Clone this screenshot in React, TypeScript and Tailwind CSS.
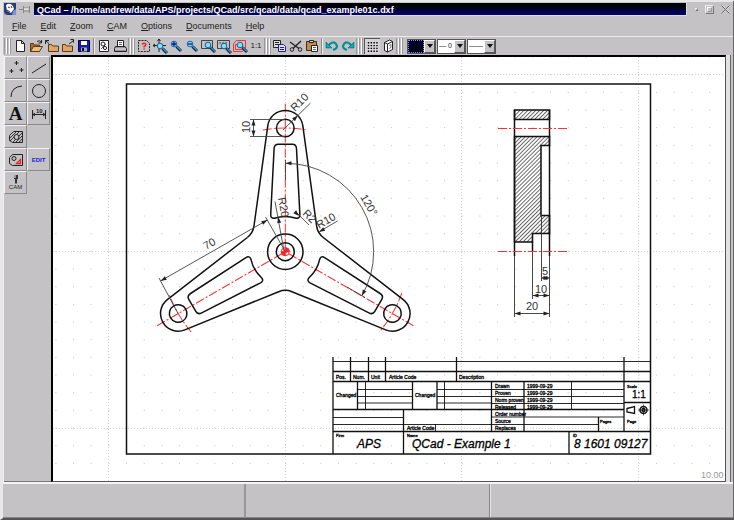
import type { ReactNode } from 'react'

const TITLE = 'QCad – /home/andrew/data/APS/projects/QCad/src/qcad/data/qcad_example01c.dxf'
const MENUS = ['File', 'Edit', 'Zoom', 'CAM', 'Options', 'Documents', 'Help']

// Grid spacing on the drawing sheet (10 mm at the current zoom)
const GRID = 17.667

const range = (n: number) => Array.from({ length: n }, (_, i) => i)

/* ---------- Toolbar parts ---------- */

function Icon({ children, className = 'w-4 h-4' }: { children: ReactNode; className?: string }) {
  return (
    <svg viewBox="0 0 16 16" className={className} fill="none" stroke="#222" strokeWidth={1}>
      {children}
    </svg>
  )
}

interface ToolButtonProps {
  label: string
  pressed?: boolean
  children: ReactNode
}

function ToolButton({ label, pressed, children }: ToolButtonProps) {
  return (
    <button
      aria-label={label}
      className={`flex h-4 w-4 shrink-0 items-center justify-center ${
        pressed ? 'bg-[#d6d4d6] border-t border-l border-[#555]' : ''
      }`}
    >
      {children}
    </button>
  )
}

function Handle() {
  return (
    <div className="flex h-4 w-2 shrink-0 gap-px border-l border-[#999] pl-px">
      <span className="w-[2px] border-r border-[#999] bg-white" />
      <span className="w-[2px] border-r border-[#999] bg-white" />
    </div>
  )
}

function Separator() {
  return <div className="mx-px h-4 w-[2px] shrink-0 border-l border-[#888] bg-[#eee]" />
}

// Magnifier shared by all zoom icons
function Lens({ x = 0, y = 0 }: { x?: number; y?: number }) {
  return (
    <g transform={`translate(${x} ${y})`}>
      <path d="M8.5 8.5 13 13" stroke="#124" strokeWidth={3} />
      <path d="M9 8.5 13 12.5" stroke="#39c" strokeWidth={1.2} />
      <circle cx={6} cy={6} r={2.8} fill="#7de3f0" stroke="#1c5fa8" />
    </g>
  )
}

function Combo({ label, value, className }: { label: string; value: string; className: string }) {
  return (
    <div className="mr-px flex h-[15px] w-[29px] shrink-0 border border-[#555] bg-white">
      <select
        aria-label={label}
        defaultValue={value}
        className={`w-4 grow appearance-none overflow-hidden text-[7px] leading-3 outline-none ${className}`}
      >
        <option>{value}</option>
      </select>
      <span className="flex w-[11px] shrink-0 items-center justify-center border border-t-white border-l-white border-r-[#555] border-b-[#555] bg-[#c4c2c4]">
        <svg viewBox="0 0 6 4" className="h-1 w-[6px]">
          <path d="M0 0h6L3 4z" fill="#111" />
        </svg>
      </span>
    </div>
  )
}

function Toolbar() {
  return (
    <div className="flex h-[19px] items-center border-t border-[#ececec] pl-px">
      <Handle />
      <ToolButton label="New">
        <Icon>
          <path d="M4.500 2.500h5l3 3v8h-8z" fill="#fff" />
          <path d="M9.500 2.500v3h3" />
        </Icon>
      </ToolButton>
      <ToolButton label="Open">
        <Icon>
          <path d="M2.500 13.500v-8h3l1 1.500h5v6.500z" fill="#a86b30" stroke="#5c3a16" />
          <path d="M2.500 13.500l3-5h9l-3 5z" fill="#eebc7c" stroke="#5c3a16" />
          <path d="M9 3.500q3-2 4.500 1M13.500 2v3h-3" />
        </Icon>
      </ToolButton>
      <ToolButton label="Load">
        <Icon>
          <path d="M4.500 13.500v-7h3l1 1.500h6v5.500z" fill="#e0a866" stroke="#5c3a16" />
          <path d="M1.500 6V2.500H5M1.500 2.500l3.500 3" />
        </Icon>
      </ToolButton>
      <ToolButton label="Export">
        <Icon>
          <path d="M2.500 13.500v-7h3l1 1.500h6v5.500z" fill="#e0a866" stroke="#5c3a16" />
          <path d="M9 6l4.500-3.500M10.500 1.500h3v3" />
        </Icon>
      </ToolButton>
      <ToolButton label="Save">
        <Icon>
          <path d="M2.500 2.500h11v11h-11z" fill="#1a1aa8" stroke="#000050" />
          <path d="M5 3h6v4H5z" fill="#fff" stroke="none" />
          <path d="M5 9.500h6v4H5z" fill="#aab" stroke="none" />
          <path d="M6 10h2v3H6z" fill="#112" stroke="none" />
        </Icon>
      </ToolButton>
      <Separator />
      <ToolButton label="Print preview">
        <Icon>
          <path d="M3.500 2.500h9v11h-9z" fill="#fff" />
          <circle cx={7} cy={6} r={2} />
          <circle cx={9} cy={10} r={1.600} />
          <path d="M5 11l5-5" strokeWidth={0.700} />
        </Icon>
      </ToolButton>
      <ToolButton label="Print">
        <Icon>
          <path d="M5.500 8V2.500h6V8" fill="#fff" />
          <path d="M7 4.500h3M7 6.500h3" strokeWidth={0.700} />
          <path d="M3.500 8.500h9.500l1.500 2v3h-12v-3z" fill="#999" />
          <path d="M3 11h11" stroke="#eee" />
        </Icon>
      </ToolButton>
      <Handle />
      <ToolButton label="Redraw">
        <Icon>
          <path d="M2.500 2.500h8l3 3v8h-11z" strokeDasharray="2 1" />
          <path d="M6 6.500q2-2.500 4 0 0 1.500-2 2v1M7.500 11h1.200" stroke="#e22" strokeWidth={1.300} />
        </Icon>
      </ToolButton>
      <ToolButton label="Pan zoom">
        <Icon>
          <path d="M7 1v13M1 7.500h13M5.500 3 7 1l1.500 2M3 6 1 7.500 3 9" />
          <Lens x={2} y={2} />
        </Icon>
      </ToolButton>
      <ToolButton label="Zoom in">
        <Icon>
          <Lens />
          <path d="M4 6h4M6 4v4" stroke="#118" strokeWidth={1.300} />
        </Icon>
      </ToolButton>
      <ToolButton label="Zoom out">
        <Icon>
          <Lens />
          <path d="M4 6h4" stroke="#118" strokeWidth={1.300} />
        </Icon>
      </ToolButton>
      <ToolButton label="Zoom window">
        <Icon>
          <path d="M1.500 2.500h11v8h-11z" stroke="#444" />
          <Lens x={2} y={1} />
        </Icon>
      </ToolButton>
      <ToolButton label="Zoom page">
        <Icon>
          <path d="M1.500 2.500h12v8h-12z" stroke="#444" />
          <path d="M3 5h9" stroke="#444" strokeDasharray="2 1" />
          <Lens x={2} y={2} />
        </Icon>
      </ToolButton>
      <ToolButton label="Auto zoom">
        <Icon>
          <path d="M1.500 5.500l3-3h9v8l-3 3h-9z" stroke="#e33" />
          <path d="M3.500 6.500h7v5h-7z" stroke="#e33" />
          <Lens x={2} y={1} />
        </Icon>
      </ToolButton>
      <button className="w-4 shrink-0 text-center text-[8px] leading-4 text-[#222]">1:1</button>
      <Handle />
      <ToolButton label="Copy">
        <Icon>
          <path d="M1.500 2.500h7v7h-7z" fill="#ddd" />
          <path d="M3 4.500h4M3 6.500h4" />
          <path d="M6.500 6.500h5l2 2v5h-7z" fill="#dde" stroke="#228" />
          <path d="M8 9.500h4M8 11.500h4" stroke="#228" />
        </Icon>
      </ToolButton>
      <ToolButton label="Cut">
        <Icon>
          <path d="M2 4l9 6.500M13 3 5 10.500" strokeWidth={1.400} />
          <circle cx={4} cy={11.500} r={1.800} />
          <circle cx={12} cy={11.500} r={1.800} />
        </Icon>
      </ToolButton>
      <ToolButton label="Paste">
        <Icon>
          <path d="M2.500 3.500h10v9h-10z" fill="#c08a50" stroke="#4a2c10" />
          <path d="M5.500 2.500h4v2h-4z" fill="#ddd" />
          <path d="M7.500 7.500h6v6h-6z" fill="#fff" />
          <path d="M9 9.500h3M9 11.500h3" strokeWidth={0.700} />
        </Icon>
      </ToolButton>
      <Separator />
      <ToolButton label="Undo">
        <Icon>
          <path d="M4 8q5-6 8-2t-3 6" stroke="#078f98" strokeWidth={2.200} />
          <path d="M2 4v6h6z" fill="#0aa9b4" stroke="#056" strokeWidth={0.500} />
        </Icon>
      </ToolButton>
      <ToolButton label="Redo">
        <Icon>
          <path d="M12 8Q7 2 4 6t3 6" stroke="#078f98" strokeWidth={2.200} />
          <path d="M14 4v6H8z" fill="#0aa9b4" stroke="#056" strokeWidth={0.500} />
        </Icon>
      </ToolButton>
      <Handle />
      <ToolButton label="Grid" pressed>
        <Icon>
          <path
            d="M3 3.500h11M3 6.500h11M3 9.500h11M3 12.500h11"
            stroke="#000"
            strokeWidth={1.500}
            strokeDasharray="1.500 1.500"
          />
        </Icon>
      </ToolButton>
      <ToolButton label="Library">
        <Icon>
          <path d="M4.500 4.500l5-2.500 3 1.500v8l-5 2.500-3-1.500z" fill="#fff" />
          <path d="M4.500 4.500l3 1.500 5-2.500M7.500 6v8" />
          <path d="M9 7.500l2-1v3l-2 1" strokeWidth={0.600} />
        </Icon>
      </ToolButton>
      <Handle />
      <div className="flex pl-[3px]">
        <Combo
          label="Colour"
          value="Black"
          className="border border-dotted border-[#88f] bg-[#00001c] text-transparent"
        />
        <Combo label="Width" value="— 0" className="pl-px text-[#222]" />
        <Combo label="Line type" value="——" className="pl-px text-[#222]" />
      </div>
    </div>
  )
}

/* ---------- Left tool box ---------- */

function BoxButton({ label, children }: { label: string; children: ReactNode }) {
  return (
    <button
      aria-label={label}
      className="flex h-[23px] w-[23px] items-center justify-center border border-t-[#f2f2f2] border-l-[#f2f2f2] border-r-[#8a888a] border-b-[#8a888a]"
    >
      {children}
    </button>
  )
}

function ToolBox() {
  return (
    <div className="grid w-[47px] shrink-0 auto-rows-[23px] grid-cols-[23px_23px] content-start border-b border-[#777] pt-px">
      <BoxButton label="Points">
        <Icon>
          <path d="M8.500 1v4M6.500 3h4M3.500 9v4M1.500 11h4M13.500 8v4M11.500 10h4" />
        </Icon>
      </BoxButton>
      <BoxButton label="Lines">
        <Icon>
          <path d="M1 13 15 4" />
        </Icon>
      </BoxButton>
      <BoxButton label="Arcs">
        <Icon>
          <path d="M3 14Q3 4 14 3" />
        </Icon>
      </BoxButton>
      <BoxButton label="Circles">
        <Icon>
          <circle cx={8} cy={8} r={6.500} />
        </Icon>
      </BoxButton>
      <BoxButton label="Text">
        <span className="font-['Liberation_Serif',serif] text-[19px] leading-5 font-bold text-[#111]">A</span>
      </BoxButton>
      <BoxButton label="Dimensions">
        <svg viewBox="0 0 16 16" className="h-4 w-4" fill="none" stroke="#222">
          <path d="M1.500 4v9M14.500 4v9M2 8.500h12M4 7 2 8.500 4 10M12 7l2 1.500-2 1.500" />
          <text x={5} y={7} fontSize={6} fontWeight="bold" fill="#222" stroke="none">10</text>
        </svg>
      </BoxButton>
      <BoxButton label="Hatching">
        <Icon>
          <path d="M1.500 6.500l4-4h9v11H4.500l-3-2z" fill="#c4c2c4" />
          <path d="M2 9l6-6M2 12l9-9M5 13l9-9M8 13l6-6M11 13l3-3" strokeWidth={0.900} />
          <circle cx={8.500} cy={8} r={2.500} fill="#c4c2c4" />
        </Icon>
      </BoxButton>
      <span />
      <BoxButton label="Measure">
        <Icon>
          <path d="M1.500 5.500l3-3h10v11h-10l-3-2z" />
          <circle cx={6} cy={6.500} r={2} />
          <path d="M8.500 11.500h4v-4z" stroke="#e22" strokeWidth={1.300} />
        </Icon>
      </BoxButton>
      <BoxButton label="Edit">
        <span className="text-[6px] leading-4 font-bold text-[#1c1cd8]">EDIT</span>
      </BoxButton>
      <BoxButton label="CAM">
        <span className="flex flex-col items-center text-[6px] leading-[7px] text-[#222]">
          <svg viewBox="0 0 8 9" className="h-[9px] w-2">
            <path d="M2 0h4v4H5v4L4 9 3 8V4H2z" fill="#333" />
            <path d="M3 0v3" stroke="#fff" />
          </svg>
          CAM
        </span>
      </BoxButton>
    </div>
  )
}

/* ---------- Drawing ---------- */

// Arrow head with its tip at x/y, pointing along `angle`
function Arrow({ x, y, angle }: { x: number; y: number; angle: number }) {
  return <path d="M0 0-6-2v4z" fill="#222" stroke="none" transform={`translate(${x} ${y}) rotate(${angle})`} />
}

function DimText({ x, y, angle = 0, children }: { x: number; y: number; angle?: number; children: string }) {
  return (
    <text transform={`translate(${x} ${y}) rotate(${angle})`} fontSize={11} fill="#333" stroke="none">
      {children}
    </text>
  )
}

function SheetGrid() {
  return (
    <g>
      {range(24).map((row) => (
        <path
          key={row}
          d={`M55.400 ${74.700 + (row - 1) * GRID}H725`}
          stroke="#c4c4c4"
          strokeDasharray={`1 ${GRID - 1}`}
        />
      ))}
      <path
        d="M108.500 57V481M285.500 57V481M461.500 57V481M638.500 57V481M53 74.500H725M53 251.500H725M53 428.500H725"
        stroke="#d4d4d4"
        strokeDasharray="1 2"
      />
    </g>
  )
}

// One third of the spider: boss, both flanks, fillet and slot
const ARM = 'M-38-14.200A17.670 17.670 0 0 0-31.300-25.750L-17.500-126.100A17.670 17.670 0 0 1 17.500-126.100L31.300-25.750'
const SLOT =
  'M-7-107.400H7Q11-107.400 11.200-103L14.600-37Q14.600-33 11-33.500A35.300 35.300 0 0 0-11-33.500Q-14.600-33-14.600-37L-11.200-103Q-11-107.400-7-107.400Z'

function FrontView() {
  return (
    <>
      <g transform="translate(285.300 251.700)">
        {[0, 120, 240].map((angle) => (
          <g key={angle} transform={`rotate(${angle})`}>
            <path d="M0-148V0" stroke="#f33" strokeDasharray="9 2 2 2" />
            <path d="M-22.500-121.600A123.700 123.700 0 0 1 22.500-121.600" stroke="#f33" strokeDasharray="9 2 2 2" />
            <g strokeWidth={1.500}>
              <path d={ARM} />
              <path d={SLOT} />
              <circle cy={-123.700} r={8.800} />
            </g>
          </g>
        ))}
        <circle r={17.700} strokeWidth={1.500} />
        <circle r={9} strokeWidth={1.500} />
        <circle r={4} stroke="#f22" />
        <path d="M0 0V4A4 4 0 0 1-4 0ZM0 0V-4A4 4 0 0 1 4 0Z" fill="#f22" stroke="#f22" />
      </g>

      {/* Dimensions */}
      <g stroke="#444" strokeWidth={0.900}>
        <path d="M250 119.500H285M250 136.500H285M253.500 119.500V136.500" />
        <path d="M283 130 310.500 103" />
        <path d="M285.300 163.300A88.300 88.300 0 0 1 361.800 295.800M285.500 160V180M347 287 365 297.500" />
        <path d="M160.600 280.900 267.400 220M178 313.500 159 278M285.300 251.700 265.500 217" />
        <path d="M284 251 275 201.500M297 213 309 225M319.500 231.500 337.500 221" />
      </g>
      <Arrow x={253.5} y={119.5} angle={-90} />
      <Arrow x={253.5} y={136.5} angle={90} />
      <Arrow x={297.8} y={115.5} angle={-45} />
      <Arrow x={285.5} y={163.3} angle={180} />
      <Arrow x={361.8} y={295.8} angle={118} />
      <Arrow x={160.6} y={280.9} angle={150} />
      <Arrow x={267.4} y={220} angle={-30} />
      <Arrow x={278.2} y={217} angle={-100} />
      <Arrow x={299} y={216} angle={45} />
      <Arrow x={319} y={232} angle={150} />
      <DimText x={250} y={133} angle={-90}>10</DimText>
      <DimText x={295} y={112} angle={-45}>R10</DimText>
      <DimText x={360} y={197} angle={60}>120°</DimText>
      <DimText x={206} y={250} angle={-30}>70</DimText>
      <DimText x={278} y={198} angle={80}>R20</DimText>
      <DimText x={302} y={214} angle={45}>R2</DimText>
      <DimText x={319} y={229} angle={-30}>R10</DimText>
    </>
  )
}

function SideView() {
  return (
    <>
      <path
        d="M514.500 110H549.500V119.500H514.500ZM514.500 136.500H549.500V145.500H541V215.500H549.500V233.500H532.500V242H514.500Z"
        fill="url(#hatch)"
        strokeWidth={1.500}
      />
      <path d="M514.500 110V256M549.500 110V256M532.500 242V252" strokeWidth={1.500} />
      <path d="M498 128.500H568M498 251.500H568" stroke="#f33" strokeDasharray="9 2 2 2" />
      <path
        d="M514.500 256V317M549.500 256V317M532.500 252V299M541.500 215V281M541.500 278H549.500M532.500 295.500H549.500M514.500 313.500H549.500"
        stroke="#333"
        strokeWidth={0.900}
      />
      {[
        [541.5, 278],
        [532.5, 295.5],
        [514.5, 313.5],
      ].map(([x, y]) => (
        <g key={y}>
          <Arrow x={x} y={y} angle={180} />
          <Arrow x={549.5} y={y} angle={0} />
        </g>
      ))}
      <DimText x={542} y={275}>5</DimText>
      <DimText x={535} y={293}>10</DimText>
      <DimText x={526} y={310}>20</DimText>
    </>
  )
}

const BLOCK_LABELS: [number, number, string][] = [
  [336, 379, 'Pos.'],
  [353, 379, 'Num.'],
  [371, 379, 'Unit'],
  [389, 379, 'Article Code'],
  [459, 379, 'Description'],
  [336, 397, 'Changed'],
  [415, 397, 'Changed'],
  [407, 430, 'Article Code'],
  [495, 388, 'Drawn'],
  [495, 395, 'Proven'],
  [495, 402, 'Norm proven'],
  [495, 409, 'Released'],
  [495, 416, 'Order number'],
  [495, 423, 'Source'],
  [495, 430, 'Replaces'],
  [527, 388, '1999-09-29'],
  [527, 395, '1999-09-29'],
  [527, 402, '1999-09-29'],
  [527, 409, '1999-09-29'],
]

const SMALL_LABELS: [number, number, string][] = [
  [336, 437, 'Firm'],
  [407, 437, 'Name'],
  [573, 437, 'ID'],
  [627, 388, 'Scale'],
  [600, 423, 'Pages'],
  [627, 423, 'Page'],
]

function TitleBlock() {
  return (
    <>
      <path
        d="M333 361.500H650M358 389.500H412M358 396.500H412M358 403H412M437 389.500H491M437 396.500H491M437 403H491
          M365.500 382V409M444.500 382V409M333 417.500H403M333 424.500H598M435.500 424V431
          M492 389.500H624M492 396.500H624M492 403.500H624M571.500 382V409M492 417H624"
        strokeWidth={0.900}
      />
      <path
        d="M333 357V454M350.500 357V382M368.500 357V382M385.500 357V382M456.500 357V382M624 357V431
          M333 371.500H650M333 381.500H650M357.500 382V409M412.500 382V409M437 382V409M491.500 382V431M524 382V431
          M333 409.500H624M403.500 409V454M598.500 417V431M333 431.500H650M624 402.500H650M569 431V454"
        strokeWidth={1.300}
      />
      <g fill="#000" stroke="#000" strokeWidth={0.300}>
        <g fontSize={5}>
          {BLOCK_LABELS.map(([x, y, label]) => (
            <text key={`${x}-${y}`} x={x} y={y}>{label}</text>
          ))}
        </g>
        <g fontSize={4}>
          {SMALL_LABELS.map(([x, y, label]) => (
            <text key={`${x}-${y}`} x={x} y={y}>{label}</text>
          ))}
        </g>
        <text x={632} y={398} fontSize={10}>1:1</text>
        <g fontSize={12} fontStyle="italic">
          <text x={357} y={448}>APS</text>
          <text x={412} y={448}>QCad - Example 1</text>
          <text x={574} y={448}>8 1601 09127</text>
        </g>
      </g>
      {/* First angle projection symbol */}
      <path d="M627 408.500 634.500 406.500V413.500L627 412Z" strokeWidth={1.300} />
      <circle cx={643.5} cy={410} r={3.5} strokeWidth={1.500} />
      <circle cx={643.5} cy={410} r={1.5} strokeWidth={1.500} />
      <path d="M638 410H649M643.500 404.500V415.500" strokeWidth={0.600} />
    </>
  )
}

function Drawing() {
  return (
    <svg
      viewBox="53 57 672 424"
      className="block w-full"
      fill="none"
      stroke="#111"
      role="img"
      aria-label="Technical drawing"
    >
      <defs>
        <pattern id="hatch" width={2.8} height={2.8} patternUnits="userSpaceOnUse" patternTransform="rotate(45)">
          <path d="M0.500 0V2.800" stroke="#444" strokeWidth={0.800} />
        </pattern>
      </defs>
      <SheetGrid />
      <path d="M126.500 84H650.500V454H126.500Z" strokeWidth={1.500} />
      <FrontView />
      <SideView />
      <TitleBlock />
      <text x={701} y={478} fontSize={9} fill="#999" stroke="none">10.00</text>
    </svg>
  )
}

/* ---------- Window ---------- */

function TitleBar() {
  return (
    <header className="flex h-[14px] items-center">
      <button aria-label="Window menu" className="ml-px h-3 w-3 shrink-0">
        <svg viewBox="0 0 12 12" className="h-3 w-3">
          <path d="M0 0h12v12H0z" fill="#2a3a78" />
          <path d="M2 2q4-3 7 1l1 3-3 4-4-2z" fill="#fff" />
          <path d="M4 4l2 1M7 3l1 2M3 7l3 2" stroke="#335" />
          <path d="M0 9l3 3H0zM9 8l3-2v6H8z" fill="#7b93d6" />
        </svg>
      </button>
      <button aria-label="Stick" className="ml-[3px] h-3 w-3 shrink-0">
        <svg viewBox="0 0 12 12" className="h-3 w-3" fill="none" stroke="#888">
          <path d="M0 6.500h4M4.500 3v7M5 5h5v3H5M10.500 3v7" />
          <path d="M5 6h5" stroke="#fff" />
        </svg>
      </button>
      <h1 className="ml-[3px] h-[13px] grow overflow-hidden border-r border-b border-[#ddd] bg-linear-to-b from-black to-[#000078] pl-[3px] text-[9px] leading-[14px] font-bold whitespace-nowrap text-white">
        {TITLE}
      </h1>
      <div className="flex w-[46px] shrink-0 items-center justify-between pr-[3px] pl-[8px]">
        <button aria-label="Minimize" className="h-[3px] w-[3px] border border-[#eee] border-r-[#777] border-b-[#777]" />
        <button aria-label="Maximize" className="h-[9px] w-[9px] border border-[#eee] border-r-[#777] border-b-[#777] p-px">
          <span className="block h-full w-full border border-[#999] border-t-white border-l-white" />
        </button>
        <button aria-label="Close" className="h-[9px] w-[9px]">
          <svg viewBox="0 0 9 9" className="h-[9px] w-[9px]" stroke="#666">
            <path d="M1 0.500l8 8M9 0.500l-8 8" stroke="#eee" />
            <path d="M0.500 0.500l8 8M8.500 0.500l-8 8" />
          </svg>
        </button>
      </div>
    </header>
  )
}

export default function App() {
  return (
    <div className="flex min-h-screen flex-col border-t-2 border-r border-b-2 border-l-[3px] border-t-[#e8e8e8] border-r-[#666] border-b-[#555] border-l-[#e8e8e8] bg-[#c4c2c4] font-['Liberation_Sans',Arial,sans-serif]">
      <TitleBar />
      <nav className="flex h-5 items-center gap-[14px] pl-[9px]">
        {MENUS.map((menu) => (
          <button key={menu} className="text-[9px] leading-4 text-[#1c1c1c]">
            <span className="underline">{menu[0]}</span>
            {menu.slice(1)}
          </button>
        ))}
      </nav>
      <Toolbar />
      <main className="flex grow border-l border-[#eee]">
        <ToolBox />
        <div className="min-w-0 grow border-t-2 border-r border-b border-l-2 border-t-black border-r-[#555] border-b-[#555] border-l-black bg-white">
          <Drawing />
        </div>
        <div className="w-[5px] shrink-0 border-r border-[#666] bg-[#e2e2e2]" />
        <div className="w-[2px] shrink-0" />
      </main>
      <footer className="grid h-9 grid-cols-3 border-t-2 border-b border-t-[#f4f4f4] border-b-[#888]">
        <div className="border-r-2 border-[#999]" />
        <div className="border-r border-[#888]" />
        <div className="border-l border-[#e4e4e4]" />
      </footer>
    </div>
  )
}
